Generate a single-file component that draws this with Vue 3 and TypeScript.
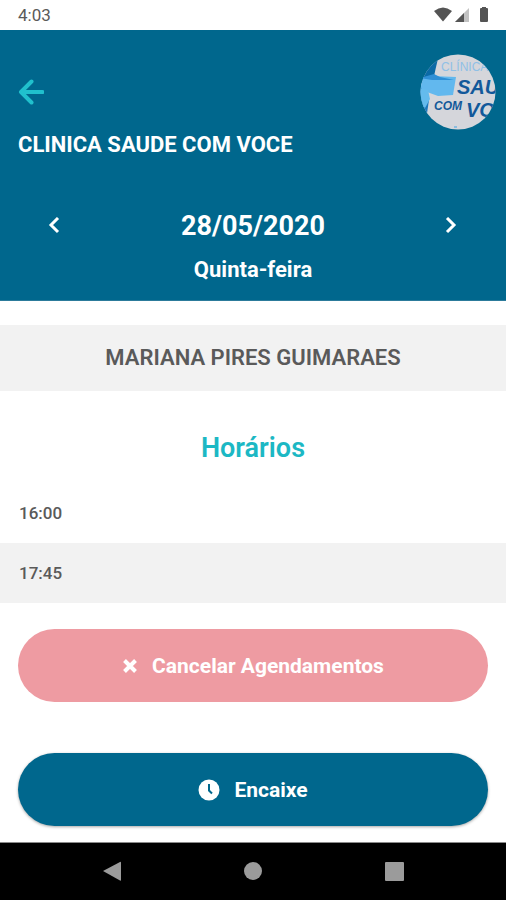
<script setup lang="ts">
import { computed, ref } from 'vue'

const clinic = 'CLINICA SAUDE COM VOCE'
const professional = 'MARIANA PIRES GUIMARAES'
const slots: string[] = ['16:00', '17:45']

const weekdays = [
  'Domingo',
  'Segunda-feira',
  'Terça-feira',
  'Quarta-feira',
  'Quinta-feira',
  'Sexta-feira',
  'Sábado',
]

const day = ref(new Date(2020, 4, 28))

const dateLabel = computed(() => {
  const d = String(day.value.getDate()).padStart(2, '0')
  const m = String(day.value.getMonth() + 1).padStart(2, '0')
  return `${d}/${m}/${day.value.getFullYear()}`
})
const weekday = computed(() => weekdays[day.value.getDay()])

function move(days: number): void {
  const next = new Date(day.value)
  next.setDate(next.getDate() + days)
  day.value = next
}
</script>

<template>
  <div class="screen">
    <div class="status">
      <span>4:03</span>
      <svg class="status-icons" viewBox="0 0 56 18" aria-hidden="true">
        <path d="M0 5Q9-2 18 5L9 15.500Z" fill="#545454" />
        <path d="M35 2V16H21Z" fill="#c2c2c2" />
        <path d="M30 7V16H21Z" fill="#545454" />
        <path d="M48 2V1h4v1h1q1 0 1 1v12q0 1-1 1h-6q-1 0-1-1V3q0-1 1-1z" fill="#545454" />
      </svg>
    </div>

    <header class="header">
      <div class="top">
        <button class="icon-button" type="button" aria-label="Voltar">
          <svg class="back" viewBox="0 0 26 26" aria-hidden="true">
            <path d="M13.500 2.500L3 13L13.500 23.500M3.500 13H24.500" />
          </svg>
        </button>
        <svg class="logo" viewBox="0 0 76 76" role="img" aria-label="Clinica Saude com Voce">
          <defs>
            <clipPath id="logo-clip"><circle cx="38" cy="38" r="37.500" /></clipPath>
          </defs>
          <g clip-path="url(#logo-clip)">
            <rect width="76" height="76" fill="#d5d6db" />
            <path d="M0 0H19L14 22L0 28Z" fill="#0b6aa6" />
            <path d="M0 24L12 22L36 23L33 41L18 42L7 38L0 34Z" fill="#62b8ee" />
            <path d="M0 24L14 20L20 23L34 26L12 26Z" fill="#2f8fd6" />
            <path d="M0 32L9 46L6 66L0 60Z" fill="#1c78bd" />
            <path d="M0 34L8 36L10 45L5 54L0 50Z" fill="#64bbed" />
            <path d="M34 73h3M55 72h3" fill="none" stroke="#8bbde0" stroke-width="2" />
            <text class="logo-thin" x="21" y="17">CLÍNICA</text>
            <text class="logo-bold" x="37" y="40">SAU</text>
            <text class="logo-small" x="14" y="56">COM</text>
            <text class="logo-bold" x="46" y="63">VO</text>
          </g>
        </svg>
      </div>
      <h1 class="clinic">{{ clinic }}</h1>
      <div class="date-row">
        <button class="icon-button" type="button" aria-label="Dia anterior" @click="move(-1)">
          <svg class="chevron" viewBox="0 0 18 18" aria-hidden="true"><path d="M12 1L5 8L12 15" /></svg>
        </button>
        <span class="date">{{ dateLabel }}</span>
        <button class="icon-button" type="button" aria-label="Próximo dia" @click="move(1)">
          <svg class="chevron" viewBox="0 0 18 18" aria-hidden="true"><path d="M5 1L12 8L5 15" /></svg>
        </button>
      </div>
      <p class="weekday">{{ weekday }}</p>
    </header>

    <main class="content">
      <p class="professional">{{ professional }}</p>
      <h2 class="heading">Horários</h2>
      <ul class="slots">
        <li v-for="slot in slots" :key="slot" class="slot">{{ slot }}</li>
      </ul>
      <div class="actions">
        <button class="action cancel" type="button">
          <svg class="cross" viewBox="0 0 16 16" aria-hidden="true"><path d="M2.500 2.500L13.500 13.500M13.500 2.500L2.500 13.500" /></svg>
          <span>Cancelar Agendamentos</span>
        </button>
        <button class="action fit" type="button">
          <svg class="clock" viewBox="0 0 22 22" aria-hidden="true">
            <circle cx="11" cy="11" r="10.500" fill="#fff" />
            <path d="M11 5V11.500L14 14.500" />
          </svg>
          <span>Encaixe</span>
        </button>
      </div>
    </main>

    <nav class="system" aria-label="Sistema">
      <button class="icon-button" type="button" aria-label="Voltar à tela anterior">
        <svg class="key" viewBox="0 0 20 22" aria-hidden="true"><path d="M2 10L19 1Q20 .5 20 1.500V19Q20 20 19 19.500Z" /></svg>
      </button>
      <button class="icon-button" type="button" aria-label="Início">
        <svg class="key" viewBox="0 0 20 22" aria-hidden="true"><circle cx="10" cy="10" r="9" /></svg>
      </button>
      <button class="icon-button" type="button" aria-label="Aplicativos recentes">
        <svg class="key" viewBox="0 0 20 22" aria-hidden="true"><rect x="0" y="1" width="19" height="19" rx="1" /></svg>
      </button>
    </nav>
  </div>
</template>

<style>
body {
  margin: 0;
  background: #fff;
}
</style>

<style scoped>
.screen {
  display: flex;
  flex-direction: column;
  min-height: 100vh;
  font-family: Roboto, "Liberation Sans", sans-serif;
  color: #5a5a5a;
}

.status {
  display: flex;
  justify-content: space-between;
  align-items: center;
  height: 30px;
  padding: 0 16px 0 18px;
  font-size: 17px;
}

.status-icons {
  width: 56px;
  height: 18px;
}

.header {
  box-sizing: border-box;
  padding: 24px 10px 14px 18px;
  background: #00678d;
  color: #fff;
  border-bottom: 1px solid #2c7b9b;
}

.top {
  display: flex;
  justify-content: space-between;
  align-items: center;
}

.icon-button {
  display: flex;
  padding: 0;
  border: 0;
  background: none;
  cursor: pointer;
}

.back {
  width: 26px;
  height: 26px;
  fill: none;
  stroke: #20c0cd;
  stroke-width: 4;
  stroke-linecap: round;
  stroke-linejoin: round;
}

.logo {
  width: 76px;
  height: 76px;
}

.logo text {
  font-family: "Liberation Sans", sans-serif;
  fill: #12599a;
}

.logo .logo-thin {
  font-size: 12px;
  fill: #8fc0e6;
}

.logo .logo-bold {
  font-size: 20px;
  font-weight: 700;
  font-style: italic;
}

.logo .logo-small {
  font-size: 12px;
  font-weight: 700;
  font-style: italic;
}

.clinic {
  margin: 0;
  font-size: 22px;
  line-height: 30px;
  font-weight: 700;
}

.date-row {
  display: flex;
  justify-content: space-between;
  align-items: center;
  margin: 48px 36px 0 28px;
}

.chevron {
  width: 18px;
  height: 18px;
  fill: none;
  stroke: #fff;
  stroke-width: 3;
}

.date {
  font-size: 27px;
  line-height: 36px;
  font-weight: 700;
}

.weekday {
  margin: 10px 8px 0 0;
  font-size: 22px;
  line-height: 32px;
  font-weight: 700;
  text-align: center;
}

.content {
  flex: 1;
  padding: 24px 0 16px;
}

.professional {
  margin: 0;
  padding: 18px;
  background: #f2f2f2;
  font-size: 22px;
  line-height: 30px;
  font-weight: 600;
  text-align: center;
}

.heading {
  margin: 40px 0 18px;
  font-size: 27px;
  line-height: 34px;
  font-weight: 600;
  text-align: center;
  color: #1cb8c4;
}

.slots {
  margin: 0;
  padding: 0;
  list-style: none;
}

.slot {
  padding: 0 19px;
  font-size: 17px;
  line-height: 60px;
  font-weight: 500;
}

.slot:nth-child(even) {
  background: #f2f2f2;
}

.actions {
  display: flex;
  flex-direction: column;
  gap: 51px;
  padding: 26px 18px 0;
}

.action {
  display: flex;
  justify-content: center;
  align-items: center;
  gap: 14px;
  height: 73px;
  padding: 0 24px;
  border: 0;
  border-radius: 37px;
  color: #fff;
  font-family: inherit;
  font-size: 21px;
  font-weight: 700;
  cursor: pointer;
}

.cancel {
  background: #ee9ba2;
}

.fit {
  background: #00678d;
  box-shadow: 0 1px 3px rgba(0, 0, 0, 0.35);
}

.cross {
  width: 16px;
  height: 16px;
  fill: none;
  stroke: #fff;
  stroke-width: 4;
}

.clock {
  width: 22px;
  height: 22px;
}

.clock path {
  fill: none;
  stroke: #00678d;
  stroke-width: 2;
}

.system {
  display: flex;
  justify-content: space-between;
  align-items: center;
  box-sizing: border-box;
  height: 58px;
  padding: 0 20%;
  background: #000;
  border-top: 1px solid #8a8a8a;
}

.content {
  padding-bottom: 15px;
}

.key {
  width: 20px;
  height: 22px;
  fill: #9b9b9b;
}
</style>
